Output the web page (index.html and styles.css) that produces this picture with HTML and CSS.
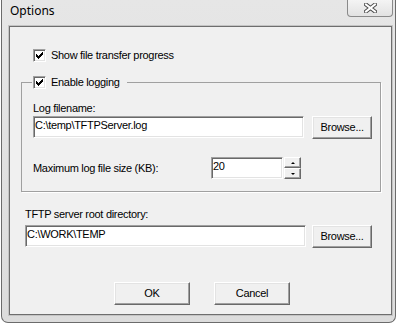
FILE: index.html
```html
<!DOCTYPE html>
<html lang="en">
<head>
    <meta charset="UTF-8">
    <title>Options</title>
    <link rel="stylesheet" href="styles.css">
</head>
<body>
    <div class="window">
        <div class="titlebar">
            <span class="title">Options</span>
            <span class="close-btn">
                <svg width="13" height="10" viewBox="0 0 13 10">
                    <path d="M2 1.5 L11 8.5 M11 1.5 L2 8.5" stroke="#4a4a4a" stroke-width="4" stroke-linecap="square"/>
                    <path d="M2 1.5 L11 8.5 M11 1.5 L2 8.5" stroke="#fff" stroke-width="2" stroke-linecap="square"/>
                </svg>
            </span>
        </div>

        <div class="client">
            <div class="check-row show-progress">
                <span class="checkbox">
                    <svg width="9" height="9" viewBox="0 0 9 9" shape-rendering="crispEdges">
                        <path d="M1 3h1v3h-1z M2 4h1v3h-1z M3 5h1v3h-1z M4 4h1v3h-1z M5 3h1v3h-1z M6 2h1v3h-1z M7 1h1v3h-1z" fill="#000"/>
                    </svg>
                </span>
                Show file transfer progress
            </div>

            <fieldset class="group">
                <legend class="check-row">
                    <span class="checkbox">
                        <svg width="9" height="9" viewBox="0 0 9 9" shape-rendering="crispEdges">
                            <path d="M1 3h1v3h-1z M2 4h1v3h-1z M3 5h1v3h-1z M4 4h1v3h-1z M5 3h1v3h-1z M6 2h1v3h-1z M7 1h1v3h-1z" fill="#000"/>
                        </svg>
                    </span>
                    Enable logging
                </legend>

                <div class="label log-label">Log filename:</div>
                <div class="field-row">
                    <div class="textbox log-file">C:\temp\TFTPServer.log</div>
                    <div class="btn browse">Browse...</div>
                </div>

                <div class="size-row">
                    <span class="size-label">Maximum log file size (KB):</span>
                    <div class="textbox spin-value">20</div>
                    <div class="spin">
                        <span class="spin-btn"><span class="arrow-up"></span></span>
                        <span class="spin-btn"><span class="arrow-down"></span></span>
                    </div>
                </div>
            </fieldset>

            <div class="label root-label">TFTP server root directory:</div>
            <div class="field-row root-row">
                <div class="textbox root-dir">C:\WORK\TEMP</div>
                <div class="btn browse">Browse...</div>
            </div>

            <div class="dialog-buttons">
                <div class="btn dlg">OK</div>
                <div class="btn dlg">Cancel</div>
            </div>
        </div>
    </div>
</body>
</html>
```

FILE: styles.css
```css
body {
    margin: 0;
    padding: 0;
    background-color: #fff;
}
.window {
    box-sizing: border-box;
    width: 395px;
    height: 323px;
    margin-left: 1px;
    border: 1px solid #6b6b6b;
    border-top: none;
    border-radius: 0 0 7px 7px;
    background: linear-gradient(180deg, #e6e6e6 0%, #e2e2e2 40%, #dcdcdc 100%);
}
.titlebar {
    display: flex;
    align-items: flex-start;
    height: 26px;
}
.title {
    font-family: "Noto Sans", sans-serif;
    font-size: 12px;
    line-height: 16px;
    color: #000;
    margin: 3px 0 0 8px;
}
.close-btn {
    box-sizing: border-box;
    width: 46px;
    height: 17px;
    margin: 0 2px 0 auto;
    border: 1px solid #8a8a8a;
    border-top: none;
    border-radius: 0 0 4px 4px;
    background: linear-gradient(180deg, #f4f4f4, #e2e2e2);
    display: flex;
    align-items: center;
    justify-content: center;
}
.client {
    box-sizing: border-box;
    width: 383px;
    height: 289px;
    margin-left: 7px;
    border: 1px solid #6e6e6e;
    box-shadow: 0 0 0 1px #c4c4c4;
    background-color: #f0f0f0;
    font-family: "Liberation Sans", Arial, sans-serif;
    font-size: 11px;
    line-height: 13px;
    letter-spacing: -0.3px;
    color: #000;
}
.check-row {
    display: flex;
    align-items: center;
    height: 13px;
}
.show-progress {
    margin: 22px 0 0 23px;
}
.checkbox {
    box-sizing: border-box;
    width: 13px;
    height: 13px;
    margin-right: 5px;
    background-color: #fff;
    border: 1px solid;
    border-color: #a0a0a0 #fff #fff #a0a0a0;
    box-shadow: inset 1px 1px 0 #696969, inset -1px -1px 0 #e3e3e3;
    display: flex;
    align-items: center;
    justify-content: center;
}
.checkbox svg {
    display: block;
}
.group {
    box-sizing: border-box;
    width: 360px;
    margin: 14px 0 0 11px;
    padding: 13px 8px 12px 11px;
    border: 1px solid #a0a0a0;
    box-shadow: 1px 1px 0 #fff;
    min-width: 0;
}
.group legend {
    margin-left: -1px;
    padding: 0 7px 0 1px;
    background-color: #f0f0f0;
}
.label {
    height: 13px;
}
.log-label {
    margin-bottom: 1px;
}
.field-row {
    display: flex;
    align-items: flex-start;
    gap: 8px;
}
.textbox {
    box-sizing: border-box;
    height: 22px;
    padding: 2px 1px 0;
    background-color: #fff;
    border: 1px solid;
    border-color: #a0a0a0 #fff #fff #a0a0a0;
    box-shadow: inset 1px 1px 0 #696969, inset -1px -1px 0 #e3e3e3;
    white-space: nowrap;
}
.log-file {
    width: 272px;
}
.btn {
    box-sizing: border-box;
    height: 23px;
    border: 1px solid;
    border-color: #fff #696969 #696969 #fff;
    box-shadow: inset -1px -1px 0 #a0a0a0, inset 1px 1px 0 #e3e3e3;
    background-color: #f0f0f0;
    display: flex;
    align-items: center;
    justify-content: center;
}
.browse {
    width: 60px;
}
.size-row {
    display: flex;
    align-items: center;
    margin-top: 18px;
}
.size-label {
    width: 178px;
}
.spin-value {
    width: 72px;
}
.spin {
    display: flex;
    flex-direction: column;
    margin-left: 1px;
}
.spin-btn {
    box-sizing: border-box;
    width: 17px;
    height: 11px;
    border: 1px solid;
    border-color: #fff #696969 #696969 #fff;
    box-shadow: inset -1px -1px 0 #a0a0a0;
    background-color: #f0f0f0;
    display: flex;
    align-items: center;
    justify-content: center;
}
.arrow-up {
    border-left: 2px solid transparent;
    border-right: 2px solid transparent;
    border-bottom: 2px solid #000;
}
.arrow-down {
    border-left: 2px solid transparent;
    border-right: 2px solid transparent;
    border-top: 2px solid #000;
}
.root-label {
    margin: 16px 0 4px 15px;
}
.root-row {
    margin-left: 15px;
    gap: 6px;
}
.root-dir {
    width: 281px;
}
.dialog-buttons {
    display: flex;
    gap: 24px;
    margin: 34px 0 0 104px;
}
.dlg {
    width: 76px;
}
```
